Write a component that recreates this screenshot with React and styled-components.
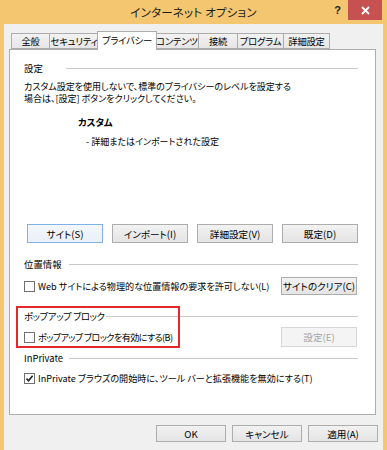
import React from "react";
import styled, { createGlobalStyle } from "styled-components";

const GlobalStyle = createGlobalStyle`
  html, body {
    margin: 0;
    padding: 0;
  }
  body {
    font-family: "Noto Sans CJK JP", "Noto Sans", sans-serif;
    font-feature-settings: "palt";
    color: #000;
  }
`;

const Frame = styled.div`
  width: 387px;
  height: 450px;
  background: #f4c670;
  display: flex;
  flex-direction: column;
  overflow: hidden;
`;

const TitleBar = styled.div`
  height: 24px;
  flex: none;
  display: grid;
  grid-template-columns: 1fr auto 1fr;
  align-items: start;
`;

const Title = styled.div`
  font-size: 11.5px;
  line-height: 24px;
  letter-spacing: 0.2px;
  color: #1a1a1a;
`;

const Controls = styled.div`
  display: flex;
  justify-content: flex-end;
  align-items: flex-start;
`;

const Help = styled.div`
  font-family: "Liberation Sans", sans-serif;
  font-weight: bold;
  font-size: 11px;
  line-height: 20px;
  margin-right: 7px;
  color: #222;
`;

const Close = styled.div`
  width: 34px;
  height: 20px;
  margin-right: 5px;
  background: #c75050;
  display: flex;
  align-items: center;
  justify-content: center;
`;

const Body = styled.div`
  flex: 1;
  margin: 0 4px;
  background: #f0f0f0;
  padding: 7px 5px 0 5px;
  display: flex;
  flex-direction: column;
`;

const TabRow = styled.div`
  display: flex;
  align-items: flex-end;
  height: 19px;
  padding-left: 2px;
  margin-bottom: -1px;
`;

const Tab = styled.div`
  box-sizing: border-box;
  width: ${(p) => p.$w}px;
  height: ${(p) => (p.$active ? 19 : 16)}px;
  margin-bottom: ${(p) => (p.$active ? 0 : 1)}px;
  margin-right: ${(p) => (p.$active ? -1 : 0)}px;
  margin-left: ${(p) => (p.$first ? 0 : p.$active ? -2 : -1)}px;
  border: 1px solid #acacac;
  border-bottom: ${(p) => (p.$active ? "none" : "1px solid #acacac")};
  background: ${(p) =>
    p.$active ? "#fff" : "linear-gradient(#f2f2f2, #e6e6e6)"};
  position: relative;
  z-index: ${(p) => (p.$active ? 2 : 1)};
  font-size: 9.3px;
  line-height: ${(p) => (p.$active ? 16 : 14)}px;
  letter-spacing: -0.2px;
  text-align: center;
  white-space: nowrap;
`;

const Panel = styled.div`
  box-sizing: border-box;
  width: 367px;
  height: 366px;
  margin-right: 2px;
  background: #fff;
  border: 1px solid #adadad;
  padding: 0 17px 0 14px;
  display: flex;
  flex-direction: column;
  position: relative;
`;

const Legend = styled.div`
  display: flex;
  align-items: center;
  gap: ${(p) => p.$gap || 6}px;
  height: 12px;
  margin-top: ${(p) => p.$top}px;
  font-size: 9.4px;
  line-height: 12px;
  letter-spacing: ${(p) => p.$ls || 0}px;
  white-space: nowrap;
`;

const Rule = styled.div`
  flex: 1;
  height: 1px;
  background: #c9c9c9;
`;

const Desc = styled.div`
  margin-top: 7px;
  font-size: 9px;
  line-height: 12px;
`;

const Level = styled.div`
  margin-top: ${(p) => p.$top}px;
  margin-left: ${(p) => p.$indent}px;
  font-size: ${(p) => (p.$bold ? 9.4 : 9)}px;
  line-height: 12px;
  font-weight: ${(p) => (p.$bold ? 700 : 400)};
`;

const ButtonGrid = styled.div`
  margin-top: 76px;
  margin-left: 3px;
  display: grid;
  grid-template-columns: repeat(4, 76px);
  column-gap: 9px;
`;

const Button = styled.div`
  box-sizing: border-box;
  width: ${(p) => (p.$w ? `${p.$w}px` : "auto")};
  height: ${(p) => p.$h || 19}px;
  border: 1px solid
    ${(p) => (p.$focus ? "#7fb2e5" : p.$disabled ? "#d6d6d6" : "#adadad")};
  background: ${(p) =>
    p.$focus
      ? "linear-gradient(#f3f7fb, #e9f0f8)"
      : p.$disabled
      ? "#f4f4f4"
      : "linear-gradient(#f2f2f2, #e4e4e4)"};
  color: ${(p) => (p.$disabled ? "#a3a3a3" : "#000")};
  font-size: 9.6px;
  display: flex;
  align-items: center;
  justify-content: center;
  white-space: nowrap;
`;

const OptionRow = styled.div`
  margin-top: ${(p) => p.$top}px;
  display: flex;
  align-items: center;
  justify-content: space-between;
  height: ${(p) => p.$h || 12}px;
  padding-right: 1px;
`;

const Check = styled.label`
  display: flex;
  align-items: center;
  gap: 3px;
  font-size: 9.1px;
  line-height: 12px;
  letter-spacing: ${(p) => p.$ls || 0}px;
  white-space: nowrap;
`;

const Box = styled.span`
  box-sizing: border-box;
  flex: none;
  width: 11px;
  height: 11px;
  border: 1px solid #707070;
  background: #fff;
  display: flex;
  align-items: center;
  justify-content: center;
`;

const Highlight = styled.div`
  position: absolute;
  left: 6px;
  top: 256px;
  width: 164px;
  height: 42px;
  box-sizing: border-box;
  border: 2px solid #e3272b;
  pointer-events: none;
`;

const Footer = styled.div`
  margin-top: 10px;
  display: flex;
  justify-content: flex-end;
  gap: 6px;
`;

function CheckBox({ checked, ls, children }) {
  return (
    <Check $ls={ls}>
      <Box>
        {checked && (
          <svg width="9" height="9" viewBox="0 0 9 9">
            <path d="M1.5 4.6 L3.6 6.8 L7.6 1.8" fill="none" stroke="#222" strokeWidth="1.6" />
          </svg>
        )}
      </Box>
      <span>{children}</span>
    </Check>
  );
}

const tabs = [
  { label: "全般", w: 39 },
  { label: "セキュリティ", w: 50 },
  { label: "プライバシー", w: 60, active: true },
  { label: "コンテンツ", w: 44 },
  { label: "接続", w: 40 },
  { label: "プログラム", w: 47 },
  { label: "詳細設定", w: 47 },
];

export default function App() {
  return (
    <>
      <GlobalStyle />
      <Frame>
        <TitleBar>
          <div />
          <Title>インターネット オプション</Title>
          <Controls>
            <Help>?</Help>
            <Close>
              <svg width="9" height="9" viewBox="0 0 9 9">
                <path d="M1 1 L8 8 M8 1 L1 8" stroke="#fff" strokeWidth="1.8" />
              </svg>
            </Close>
          </Controls>
        </TitleBar>
        <Body>
          <TabRow>
            {tabs.map((t, i) => (
              <Tab key={t.label} $w={t.w} $active={t.active} $first={i === 0}>
                {t.label}
              </Tab>
            ))}
          </TabRow>
          <Panel>
            <Legend $top={12} $gap={23}>
              設定
              <Rule />
            </Legend>
            <Desc>
              カスタム設定を使用しないで、標準のプライバシーのレベルを設定する
              <br />
              場合は、[設定] ボタンをクリックしてください。
            </Desc>
            <Level $top={11} $indent={54} $bold>
              カスタム
            </Level>
            <Level $top={8} $indent={62}>
              - 詳細またはインポートされた設定
            </Level>
            <ButtonGrid>
              <Button $focus>サイト(S)</Button>
              <Button>インポート(I)</Button>
              <Button>詳細設定(V)</Button>
              <Button>既定(D)</Button>
            </ButtonGrid>
            <Legend $top={15} $gap={7}>
              位置情報
              <Rule />
            </Legend>
            <OptionRow $top={7} $h={18}>
              <CheckBox>Web サイトによる物理的な位置情報の要求を許可しない(L)</CheckBox>
              <Button $w={76} $h={18}>
                サイトのクリア(C)
              </Button>
            </OptionRow>
            <Legend $top={15} $gap={1} $ls={-0.4}>
              ポップアップ ブロック
              <Rule />
            </Legend>
            <OptionRow $top={5} $h={20}>
              <CheckBox ls={-0.6}>ポップアップ ブロックを有効にする(B)</CheckBox>
              <Button $w={76} $h={20} $disabled>
                設定(E)
              </Button>
            </OptionRow>
            <Legend $top={5}>
              InPrivate
              <Rule />
            </Legend>
            <OptionRow $top={8}>
              <CheckBox checked>
                InPrivate ブラウズの開始時に、ツール バーと拡張機能を無効にする(T)
              </CheckBox>
            </OptionRow>
            <Highlight />
          </Panel>
          <Footer>
            <Button $w={70} $h={17}>
              OK
            </Button>
            <Button $w={70} $h={17}>
              キャンセル
            </Button>
            <Button $w={70} $h={17}>
              適用(A)
            </Button>
          </Footer>
        </Body>
      </Frame>
    </>
  );
}
